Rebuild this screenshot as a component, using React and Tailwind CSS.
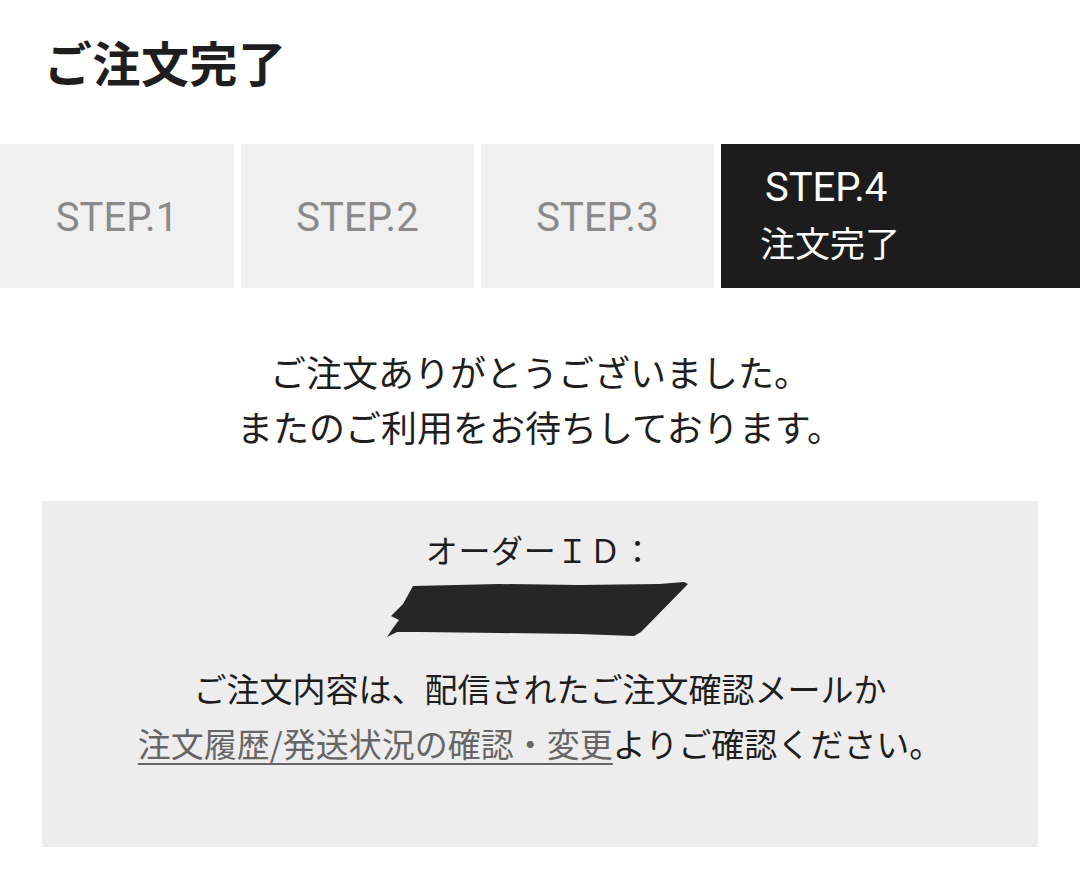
import React from "react";

const jp = { fontFamily: '"Noto Sans CJK JP", "Noto Sans", sans-serif' };

const steps = [
  { label: "STEP.1", w: "w-[234px]" },
  { label: "STEP.2", w: "w-[233px]" },
  { label: "STEP.3", w: "w-[233px]" },
];

const Redaction = () => (
  <svg width="312" height="60" viewBox="0 0 312 60" className="block">
    <path
      d="M34 6 L120 4 L200 5 L280 4 L305 2 L309 4 L262 52 L255 56 L200 54 L120 53 L40 52 L18 52 L8 57 L14 48 L20 40 L12 36 L24 24 Z"
      fill="#262626"
    />
  </svg>
);

const App = () => {
  return (
    <div className="w-[1080px] h-[896px] bg-white text-[#1e1e1e] overflow-hidden" style={jp}>
      {/* title */}
      <h1 className="pl-[44px] pt-[31px] text-[48px] leading-[60px] font-bold tracking-[0.01em]">
        ご注文完了
      </h1>

      {/* steps */}
      <div
        className="mt-[53px] flex h-[144px] gap-[7px]"
        style={{ fontFamily: 'Roboto, "Noto Sans CJK JP", sans-serif' }}
      >
        {steps.map((s) => (
          <div
            key={s.label}
            className={`${s.w} shrink-0 bg-[#f0f0f0] flex items-center justify-center pt-[4px] text-[40px] text-[#8a8a8a]`}
          >
            {s.label}
          </div>
        ))}
        <div className="flex-1 bg-[#1c1c1c] text-white flex flex-col justify-center pl-[39px] pb-[2px]">
          <div className="text-[40px] leading-[54px] pl-[5px]">STEP.4</div>
          <div className="text-[35px] leading-[54px]" style={jp}>
            注文完了
          </div>
        </div>
      </div>

      {/* thanks */}
      <div className="mt-[56px] text-center text-[36px] leading-[55px] text-[#1e1e1e]">
        <p>ご注文ありがとうございました。</p>
        <p>またのご利用をお待ちしております。</p>
      </div>

      {/* order box */}
      <div className="mt-[47px] mx-[42px] h-[346px] bg-[#ededed] flex flex-col items-center pt-[26px]">
        <p className="text-[32px] leading-[44px] tracking-[0.02em]">オーダーＩＤ：</p>
        <div className="mt-[9px] ml-[-10px]">
          <Redaction />
        </div>
        <div className="mt-[21px] text-center text-[33px] leading-[55px]">
          <p>ご注文内容は、配信されたご注文確認メールか</p>
          <p>
            <a href="#history" className="text-[#666] underline underline-offset-[6px] decoration-[2px]">
              注文履歴/発送状況の確認・変更
            </a>
            よりご確認ください。
          </p>
        </div>
      </div>
    </div>
  );
};

export default App;
